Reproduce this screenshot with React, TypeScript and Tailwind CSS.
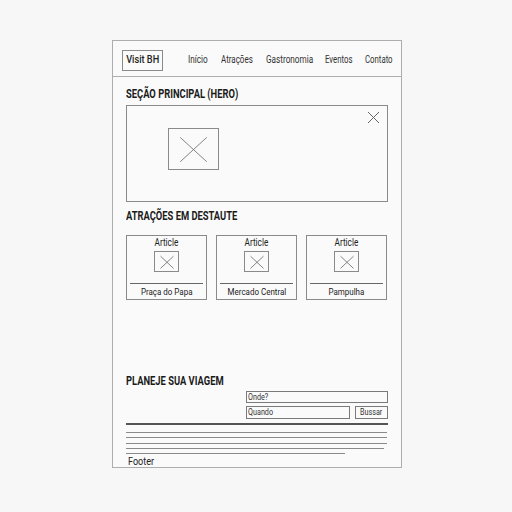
import React from "react";

const font = { fontFamily: 'Roboto, "Liberation Sans", Arial, sans-serif' };

function XBox({ w, h, className = "" }: { w: number; h: number; className?: string }) {
  return (
    <div className={`border border-[#8a8a8a] bg-[#fafafa] ${className}`} style={{ width: w, height: h }}>
      <svg width="100%" height="100%" viewBox={`0 0 ${w - 2} ${h - 2}`} preserveAspectRatio="none">
        <line x1={w * 0.22} y1={h * 0.2} x2={w * 0.74} y2={h * 0.78} stroke="#777" strokeWidth="0.9" />
        <line x1={w * 0.74} y1={h * 0.2} x2={w * 0.22} y2={h * 0.78} stroke="#777" strokeWidth="0.9" />
      </svg>
    </div>
  );
}

function Card({ name }: { name: string }) {
  return (
    <div className="w-[81px] h-[65px] border border-[#8a8a8a] flex flex-col items-center pt-[1px]">
      <div className="text-[10px] leading-[12px] text-[#222] whitespace-nowrap scale-x-[0.82]">Article</div>
      <XBox w={25} h={21} className="mt-[2px]" />
      <div className="mt-[11px] w-[73px] h-px bg-[#666]" />
      <div className="mt-[2px] text-[9.5px] leading-[12px] text-[#222] whitespace-nowrap scale-x-[0.84]">{name}</div>
    </div>
  );
}

function H({ children, className = "" }: { children: React.ReactNode; className?: string }) {
  return (
    <h2 className={`text-[12px] leading-[14px] font-bold text-[#1a1a1a] whitespace-nowrap origin-left scale-x-[0.78] ${className}`}>
      {children}
    </h2>
  );
}

export default function App() {
  return (
    <div className="w-[512px] h-[512px] bg-[#f7f7f7] pt-[40px] pl-[112px]" style={font}>
      <div className="w-[290px] h-[428px] border border-[#adadad] bg-[#fafafa] flex flex-col">
        <header className="shrink-0 h-[36px] border-b border-[#adadad] flex items-center pl-[9px] pt-[3px]">
          <div className="w-[41px] h-[21px] border border-[#8a8a8a] flex items-center justify-center text-[11.5px] font-medium text-[#222]">
            <span className="whitespace-nowrap scale-x-[0.8]">Visit BH</span>
          </div>
          <nav className="ml-[25px] flex items-center gap-[13px] text-[10px] text-[#333] leading-none pb-[1px]">
            <span className="w-[20px] whitespace-nowrap origin-left scale-x-[0.82]">Início</span>
            <span className="w-[32px] whitespace-nowrap origin-left scale-x-[0.8]">Atrações</span>
            <span className="w-[46px] whitespace-nowrap origin-left scale-x-[0.82]">Gastronomia</span>
            <span className="w-[27px] whitespace-nowrap origin-left scale-x-[0.78]">Eventos</span>
            <span className="w-[28px] whitespace-nowrap origin-left scale-x-[0.78]">Contato</span>
          </nav>
        </header>

        <main className="px-[13px] flex flex-col">
          <H className="mt-[10px]">SEÇÃO PRINCIPAL (HERO)</H>
          <div className="relative mt-[4px] h-[97px] border border-[#8a8a8a] pt-[22px] pl-[41px]">
            <XBox w={51} h={42} />
            <svg className="absolute top-[5px] right-[7px]" width="13" height="13" viewBox="0 0 13 13">
              <line x1="1" y1="1" x2="12" y2="12" stroke="#666" strokeWidth="1" />
              <line x1="12" y1="1" x2="1" y2="12" stroke="#666" strokeWidth="1" />
            </svg>
          </div>

          <H className="mt-[7px]">ATRAÇÕES EM DESTAUTE</H>
          <div className="mt-[12px] flex gap-[9px]">
            <Card name="Praça do Papa" />
            <Card name="Mercado Central" />
            <Card name="Pampulha" />
          </div>

          <H className="mt-[74px]">PLANEJE SUA VIAGEM</H>
          <div className="mt-[3px] self-end w-[142px] flex flex-col gap-[3px]">
            <div className="h-[12px] border border-[#7a7a7a] text-[8.5px] leading-[10px] pl-[1px] text-[#333]">
              <span className="inline-block whitespace-nowrap origin-left scale-x-[0.85]">Onde?</span>
            </div>
            <div className="flex gap-[5px]">
              <div className="w-[104px] h-[13px] border border-[#7a7a7a] text-[8.5px] leading-[11px] pl-[1px] text-[#333]">
                <span className="inline-block whitespace-nowrap origin-left scale-x-[0.85]">Quando</span>
              </div>
              <div className="w-[33px] h-[13px] border border-[#7a7a7a] text-[8.5px] leading-[11px] text-[#333] flex justify-center">
                <span className="whitespace-nowrap scale-x-[0.85]">Bussar</span>
              </div>
            </div>
          </div>

          <div className="mt-[4px] h-[1.5px] bg-[#555]" />
          <div className="mt-[7px] h-px bg-[#8a8a8a] w-[261px]" />
          <div className="mt-[4px] h-px bg-[#8a8a8a] w-[261px]" />
          <div className="mt-[5px] h-px bg-[#8a8a8a] w-[261px]" />
          <div className="mt-[4px] h-px bg-[#8a8a8a] w-[258px]" />
          <div className="mt-[4px] h-px bg-[#8a8a8a] w-[219px]" />
          <div className="mt-[2px] pl-[2px] text-[11px] leading-[12px] text-[#222]">
            <span className="inline-block whitespace-nowrap origin-left scale-x-[0.82]">Footer</span>
          </div>
        </main>
      </div>
    </div>
  );
}
